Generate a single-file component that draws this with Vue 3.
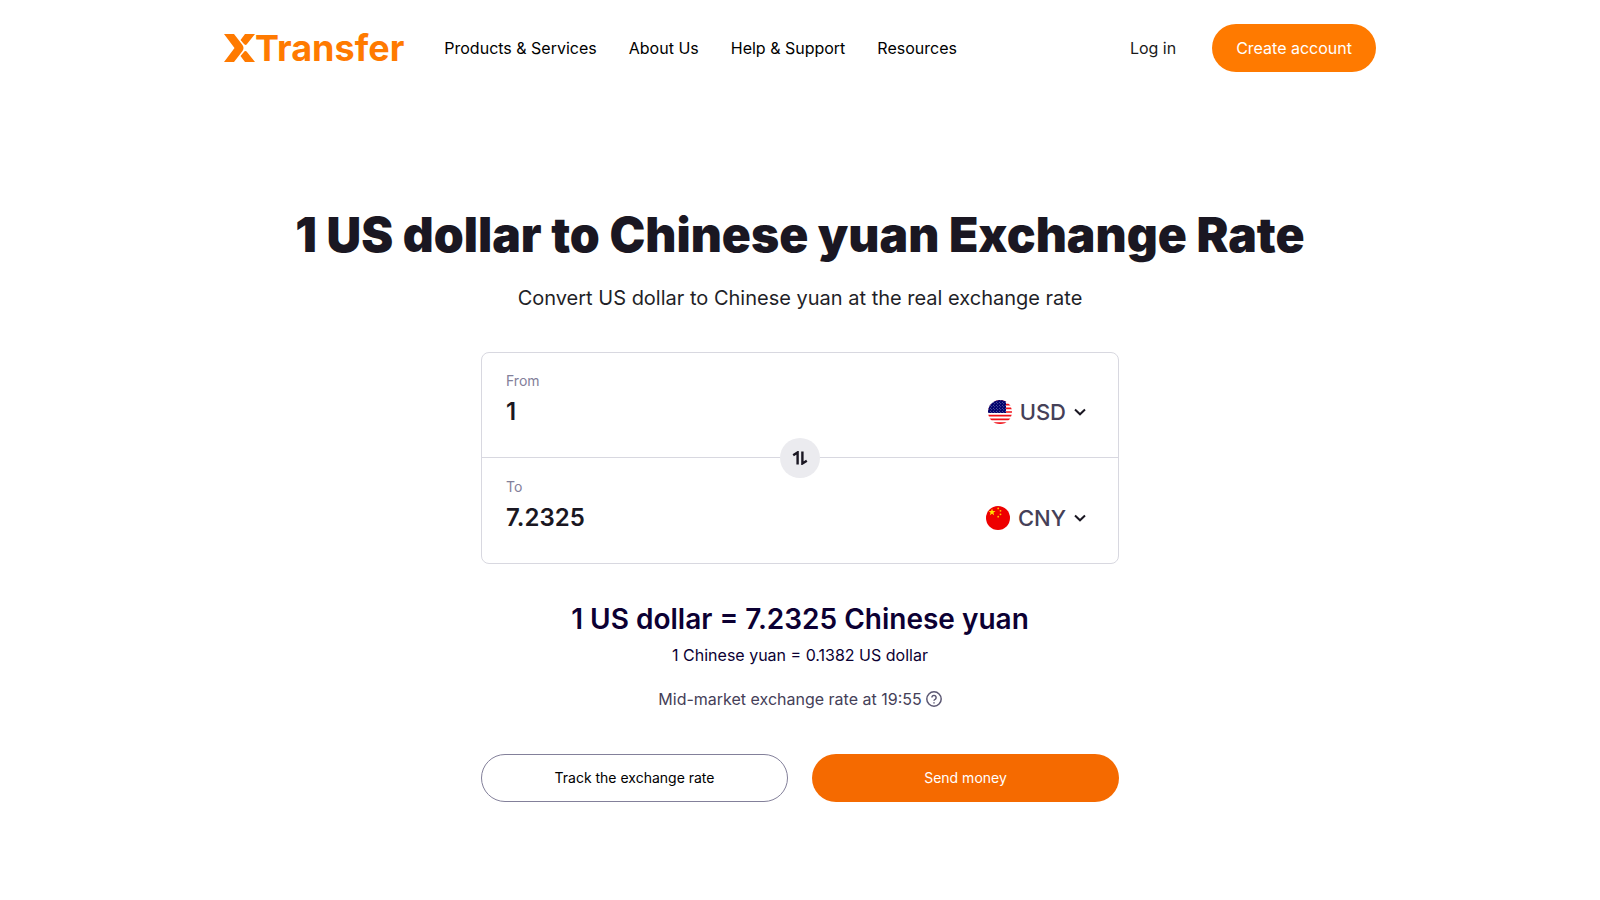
<script setup>
import { ref } from 'vue'

const navItems = ['Products & Services', 'About Us', 'Help & Support', 'Resources']
const fromAmount = ref('1')
const toAmount = ref('7.2325')
const fromCurrency = ref('USD')
const toCurrency = ref('CNY')

function swap() {
  const currency = fromCurrency.value
  fromCurrency.value = toCurrency.value
  toCurrency.value = currency
}
</script>

<template>
  <div class="page">
    <header class="header">
      <a class="logo" href="#" aria-label="XTransfer">
        <svg class="mark" viewBox="0 0 31 28" aria-hidden="true">
          <path d="M0 0H10L18.500 11Q20.500 14 18.500 17L10 28H0L10.500 14Z" />
          <path d="M19.500 9.500 16.500 6 21 0H31L23 10Q21.500 12 19.500 9.500Z" />
          <path d="M19.500 18.500Q21.500 16 23 18L31 28H21L16.500 22Z" />
        </svg>
        <span class="wordmark">Transfer</span>
      </a>
      <nav class="nav" aria-label="Main">
        <a v-for="item in navItems" :key="item" href="#">{{ item }}</a>
      </nav>
      <div class="account">
        <a class="login" href="#">Log in</a>
        <button class="create" type="button">Create account</button>
      </div>
    </header>

    <main class="main">
      <h1>1 US dollar to Chinese yuan Exchange Rate</h1>
      <p class="subtitle">Convert US dollar to Chinese yuan at the real exchange rate</p>

      <form class="converter" @submit.prevent>
        <div class="card">
          <div class="row">
            <div class="amount">
              <label for="from-amount">From</label>
              <input id="from-amount" v-model="fromAmount" type="text" inputmode="decimal" />
            </div>
            <div class="currency">
              <svg v-if="fromCurrency === 'USD'" class="flag" viewBox="0 0 24 24" aria-hidden="true">
                <use href="#flag-usd" />
              </svg>
              <svg v-else class="flag" viewBox="0 0 24 24" aria-hidden="true"><use href="#flag-cny" /></svg>
              <select v-model="fromCurrency" aria-label="From currency">
                <option>USD</option>
                <option>CNY</option>
              </select>
              <svg class="chevron" viewBox="0 0 12 8" aria-hidden="true"><path d="M1 1.500 6 6.300l5-4.800" /></svg>
            </div>
          </div>
          <div class="row">
            <div class="amount">
              <label for="to-amount">To</label>
              <input id="to-amount" v-model="toAmount" type="text" inputmode="decimal" />
            </div>
            <div class="currency">
              <svg v-if="toCurrency === 'USD'" class="flag" viewBox="0 0 24 24" aria-hidden="true">
                <use href="#flag-usd" />
              </svg>
              <svg v-else class="flag" viewBox="0 0 24 24" aria-hidden="true"><use href="#flag-cny" /></svg>
              <select v-model="toCurrency" aria-label="To currency">
                <option>USD</option>
                <option>CNY</option>
              </select>
              <svg class="chevron" viewBox="0 0 12 8" aria-hidden="true"><path d="M1 1.500 6 6.300l5-4.800" /></svg>
            </div>
          </div>
          <button class="swap" type="button" aria-label="Swap currencies" @click="swap">
            <svg viewBox="0 0 16 14" aria-hidden="true">
              <path d="M5.600 13.500V1.400L1.200 4.200M10.400 .500V12.500L14.800 9.800" />
            </svg>
          </button>
        </div>

        <div class="result">
          <p class="rate">1 US dollar = 7.2325 Chinese yuan</p>
          <p class="inverse">1 Chinese yuan = 0.1382 US dollar</p>
        </div>
        <div class="note">
          <span>Mid-market exchange rate at 19:55</span>
          <button class="help" type="button" aria-label="About the mid-market rate">
            <svg viewBox="0 0 16 16" aria-hidden="true">
              <circle cx="8" cy="8" r="7.200" />
              <path d="M5.900 6.500a2.100 2.100 0 1 1 3.200 1.800C8.300 8.700 8 9 8 9.700M8 11.200v1.400" />
            </svg>
          </button>
        </div>
        <div class="actions">
          <button class="track" type="button">Track the exchange rate</button>
          <button class="send" type="submit">Send money</button>
        </div>
      </form>
    </main>

    <svg class="defs" aria-hidden="true">
      <defs>
        <clipPath id="round"><circle cx="12" cy="12" r="12" /></clipPath>
        <pattern id="stars" width="3" height="3" patternUnits="userSpaceOnUse">
          <rect width="3" height="3" fill="#00006b" />
          <circle cx="0.800" cy="0.800" r="0.450" fill="#b9b9dc" />
          <circle cx="2.300" cy="2.300" r="0.450" fill="#b9b9dc" />
        </pattern>
        <symbol id="flag-usd" viewBox="0 0 24 24">
          <g clip-path="url(#round)">
            <rect width="24" height="24" fill="#fff" />
            <path
              d="M0 .900H24M0 4.600H24M0 8.300H24M0 12H24M0 15.700H24M0 19.400H24M0 23.100H24"
              stroke="#f01018"
              stroke-width="1.700"
            />
            <rect width="18" height="13" fill="url(#stars)" />
          </g>
        </symbol>
        <symbol id="flag-cny" viewBox="0 0 24 24">
          <circle cx="12" cy="12" r="12" fill="#ee0000" />
          <path d="M6 2.600 6.900 5.100H9.500L7.400 6.700 8.200 9.300 6 7.700 3.800 9.300 4.600 6.700 2.500 5.100H5.100Z" fill="#ffde00" />
          <g fill="#ffc400">
            <circle cx="12.200" cy="2.400" r="0.900" />
            <circle cx="14.500" cy="4.800" r="0.900" />
            <circle cx="14.500" cy="8.300" r="0.900" />
            <circle cx="12.200" cy="10.700" r="0.900" />
          </g>
        </symbol>
      </defs>
    </svg>
  </div>
</template>

<style>
body {
  margin: 0;
  background: #fff;
}
</style>

<style scoped>
.page {
  font-family: Inter, 'Liberation Sans', sans-serif;
  font-size: 16px;
  line-height: 24px;
  color: #1a1a1a;
}

.page *,
.page *::before {
  box-sizing: border-box;
}

a {
  color: inherit;
  text-decoration: none;
}

p,
h1 {
  margin: 0;
}

button,
input,
select {
  font: inherit;
  color: inherit;
  margin: 0;
  padding: 0;
  border: 0;
  background: none;
}

button {
  cursor: pointer;
}

.header {
  display: flex;
  align-items: center;
  max-width: 1200px;
  min-height: 96px;
  margin: 0 auto;
  padding: 0 24px;
}

.logo {
  display: flex;
  align-items: center;
  color: #ff7a00;
}

.mark {
  width: 31px;
  height: 28px;
  fill: currentColor;
}

.wordmark {
  font-size: 36px;
  font-weight: 700;
  line-height: 40px;
}

.nav {
  display: flex;
  gap: 32px;
  margin-left: 40px;
  color: #000;
}

.account {
  display: flex;
  align-items: center;
  gap: 36px;
  margin-left: auto;
}

.create {
  height: 48px;
  padding: 0 24px;
  border-radius: 24px;
  background: #ff7a00;
  color: #fff;
}

.main {
  padding: 105px 24px 96px;
  text-align: center;
}

h1 {
  font-size: 48px;
  font-weight: 900;
  line-height: 68px;
  color: #1a1722;
}

.subtitle {
  margin-top: 13px;
  font-size: 20px;
  line-height: 32px;
  color: #1f1f28;
}

.converter {
  max-width: 638px;
  margin: 38px auto 0;
}

.card {
  position: relative;
  border: 1px solid #d8d8e0;
  border-radius: 8px;
  text-align: left;
}

.row {
  display: flex;
  align-items: flex-end;
  padding: 18px 32px 29px 24px;
}

.row + .row {
  padding-top: 19px;
  border-top: 1px solid #d8d8e0;
}

.amount {
  display: flex;
  flex: 1;
  flex-direction: column;
  gap: 4px;
  min-width: 0;
  padding-bottom: 1px;
}

.amount label {
  font-size: 14px;
  line-height: 20px;
  color: #83809a;
}

.amount input {
  width: 100%;
  height: 32px;
  font-size: 24px;
  font-weight: 600;
  color: #1a1722;
}

.currency {
  display: flex;
  align-items: center;
  gap: 8px;
}

.flag {
  width: 24px;
  height: 24px;
}

.currency select {
  appearance: none;
  field-sizing: content;
  height: 32px;
  font-size: 22px;
  font-weight: 500;
  color: #454058;
}

.chevron {
  width: 12px;
  height: 8px;
  fill: none;
  stroke: #1a1722;
  stroke-width: 2;
}

.swap {
  position: absolute;
  top: 50%;
  left: 50%;
  display: grid;
  place-items: center;
  width: 40px;
  height: 40px;
  border-radius: 50%;
  background: #ebebef;
  transform: translate(-50%, -50%);
}

.swap svg {
  width: 16px;
  height: 14px;
  fill: none;
  stroke: #1a1722;
  stroke-width: 2.4;
}

.result {
  margin-top: 37px;
  color: #0c0033;
}

.rate {
  font-size: 28px;
  font-weight: 600;
  line-height: 36px;
}

.inverse {
  margin-top: 6px;
}

.note {
  display: flex;
  align-items: center;
  justify-content: center;
  gap: 4px;
  margin-top: 20px;
  color: #454058;
}

.help {
  display: flex;
}

.help svg {
  width: 16px;
  height: 16px;
  fill: none;
  stroke: #5c5873;
  stroke-width: 1.5;
}

.actions {
  display: grid;
  grid-template-columns: 1fr 1fr;
  gap: 24px;
  margin-top: 43px;
}

.actions button {
  height: 48px;
  border-radius: 24px;
  font-size: 14px;
}

.track {
  border: 1px solid #83809a;
  color: #000;
}

.actions .send {
  background: #f56a00;
  color: #fff;
}

.defs {
  position: absolute;
  width: 0;
  height: 0;
}
</style>
